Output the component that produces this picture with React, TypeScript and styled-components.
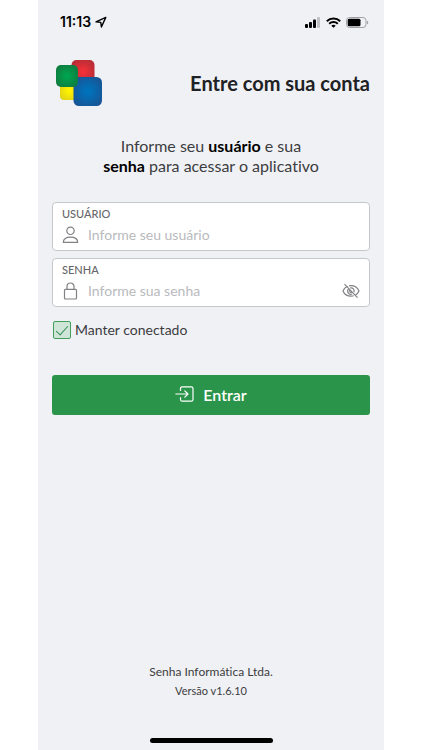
import React, { useState } from "react";
import styled, { createGlobalStyle } from "styled-components";

const GlobalStyle = createGlobalStyle`
  *, *::before, *::after { box-sizing: border-box; }
  body {
    margin: 0;
    background: #ffffff;
    color: #3c3d40;
    font-family: Lato, "Open Sans", sans-serif;
    font-variant-ligatures: none;
  }
  button, input { font: inherit; }
`;

const Page = styled.div`
  min-height: 100vh;
  display: flex;
  padding: 0 38px;
`;

const Screen = styled.div`
  flex: 1;
  min-width: 0;
  display: flex;
  flex-direction: column;
  background: #f0f1f5;
`;

const StatusBar = styled.div`
  height: 44px;
  padding: 0 15px 0 22px;
  display: flex;
  align-items: center;
  justify-content: space-between;
  color: #000000;
`;

const Clock = styled.div`
  display: flex;
  align-items: center;
  gap: 4px;
  font: 600 14px/16px Inter, sans-serif;
`;

const Indicators = styled.div`
  display: flex;
  align-items: center;
  gap: 5px;
`;

const Header = styled.header`
  display: flex;
  align-items: center;
  justify-content: space-between;
  padding: 16px 14px 0 18px;
`;

const Title = styled.h1`
  margin: 0;
  color: #202124;
  font-size: 20px;
  line-height: 24px;
  font-weight: 700;
`;

const Main = styled.main`
  display: flex;
  flex-direction: column;
  padding: 30px 14px 0;
`;

const Intro = styled.p`
  margin: 0 auto 26px;
  max-width: 222px;
  text-align: center;
  font-size: 16px;
  line-height: 20px;

  strong { color: #000000; }
`;

const Form = styled.form`
  display: flex;
  flex-direction: column;
`;

const Field = styled.div`
  height: 49px;
  margin-bottom: 7px;
  padding: 5px 9px 0;
  background: #ffffff;
  border: 1px solid #c6c7cb;
  border-radius: 4px;
`;

const FieldLabel = styled.label`
  display: block;
  color: #66676a;
  font-size: 11px;
  line-height: 12px;
  font-weight: 500;
`;

const FieldRow = styled.div`
  display: flex;
  align-items: center;
  gap: 9px;
  height: 30px;
  color: #808184;
`;

const TextInput = styled.input`
  flex: 1;
  min-width: 0;
  height: 24px;
  padding: 0 0 2px;
  border: 0;
  outline: 0;
  background: transparent;
  color: #3c3d40;
  font-size: 14px;

  &::placeholder { color: #b9babd; opacity: 1; }
`;

const IconButton = styled.button`
  display: flex;
  padding: 0;
  border: 0;
  background: none;
  color: inherit;
  cursor: pointer;
`;

const CheckLabel = styled.label`
  display: flex;
  align-items: center;
  gap: 4px;
  margin-top: 7px;
  font-size: 14px;
  line-height: 18px;
`;

const Checkbox = styled.input`
  appearance: none;
  width: 18px;
  height: 18px;
  margin: 0 0 0 1px;
  display: grid;
  place-items: center;
  border: 1px solid #3f9f5b;
  border-radius: 2px;
  background: #ffffff;

  &:checked { background: #cfe5d7; }
  &:checked::before {
    content: "";
    width: 6px;
    height: 12px;
    margin-top: -3px;
    border: solid #34915a;
    border-width: 0 1px 1px 0;
    transform: rotate(42deg);
  }
`;

const SubmitButton = styled.button`
  display: flex;
  align-items: center;
  justify-content: center;
  gap: 9px;
  height: 40px;
  margin-top: 36px;
  padding: 0 0 2px;
  border: 0;
  border-radius: 3px;
  background: #2a944b;
  color: #ffffff;
  font-size: 16px;
  font-weight: 600;
  cursor: pointer;
`;

const Footer = styled.footer`
  margin-top: auto;
  padding-bottom: 7px;
  display: flex;
  flex-direction: column;
  align-items: center;
`;

const Company = styled.span`
  font-size: 12px;
  line-height: 20px;
`;

const Version = styled.span`
  font-size: 11px;
  line-height: 18px;
`;

const HomeIndicator = styled.div`
  width: 123px;
  height: 5px;
  margin-top: 38px;
  border-radius: 3px;
  background: #000000;
`;

const LocationIcon = () => (
  <svg width="12" height="12" viewBox="0 0 12 12" fill="none" stroke="currentColor" strokeWidth="1.4" strokeLinejoin="round">
    <path d="M10.800 1.400 1 5.900l4.800.5.600 4.600Z" />
  </svg>
);

const SignalIcon = () => (
  <svg width="16" height="11" viewBox="0 0 16 11" fill="currentColor">
    <rect x="0" y="7" width="3" height="4" rx="1" />
    <rect x="4" y="5" width="3" height="6" rx="1" />
    <rect x="8" y="2.5" width="3" height="8.5" rx="1" />
    <rect x="12" y="0" width="3" height="11" rx="1" opacity="0.2" />
  </svg>
);

const WifiIcon = () => (
  <svg width="15" height="11" viewBox="0 0 15 11" fill="none" stroke="currentColor" strokeWidth="2">
    <path d="M.8 4.2a9.6 9.6 0 0 1 13.4 0" />
    <path d="M3.2 6.8a6.2 6.2 0 0 1 8.6 0" />
    <path d="M7.5 10.8 5.3 8.7a3.2 3.2 0 0 1 4.4 0Z" fill="currentColor" stroke="none" />
  </svg>
);

const BatteryIcon = () => (
  <svg width="23" height="11" viewBox="0 0 23 11">
    <rect x=".5" y=".5" width="19.5" height="10" rx="3" fill="none" stroke="#a0a1a4" />
    <rect x="1.7" y="1.7" width="12.8" height="7.6" rx="1.5" fill="#000" />
    <path d="M21 3.7c1.7.5 1.7 3.1 0 3.6Z" fill="#a0a1a4" />
  </svg>
);

const shades = [
  { id: "red", inner: "#ef3038", outer: "#a92c35" },
  { id: "yellow", inner: "#fff200", outer: "#d9cd1c" },
  { id: "green", inner: "#00a34e", outer: "#12733c" },
  { id: "blue", inner: "#0072bc", outer: "#1c4f8c" },
];

const Logo = () => (
  <svg width="46" height="46" viewBox="0 0 46 46" role="img" aria-label="Senha Informática">
    <defs>
      {shades.map((s) => (
        <radialGradient key={s.id} id={s.id} r="0.7">
          <stop offset="0.1" stopColor={s.inner} />
          <stop offset="1" stopColor={s.outer} />
        </radialGradient>
      ))}
    </defs>
    <rect x="4" y="21" width="19" height="19" rx="4" fill="url(#yellow)" />
    <rect x="15.5" y="0" width="23" height="23" rx="5" fill="url(#red)" />
    <rect x="17.5" y="17" width="28.5" height="29" rx="5.5" fill="url(#blue)" />
    <rect x="0" y="5" width="22" height="22" rx="5" fill="url(#green)" />
  </svg>
);

const UserIcon = () => (
  <svg width="17" height="18" viewBox="0 0 17 18" fill="none" stroke="currentColor" strokeWidth="1.2">
    <circle cx="8.5" cy="4.8" r="3.7" />
    <path d="M1.3 16.300c0-3.300 2.900-5.200 7.200-5.200s7.200 1.900 7.200 5.200Z" strokeLinejoin="round" />
  </svg>
);

const LockIcon = () => (
  <svg width="17" height="18" viewBox="0 0 17 18" fill="none" stroke="currentColor" strokeWidth="1.2">
    <rect x="2.5" y="7.3" width="12" height="9.7" rx="1" />
    <path d="M5 7.3V4.5a3.5 3.5 0 0 1 7 0v2.8" />
  </svg>
);

const EyeOffIcon = () => (
  <svg width="18" height="16" viewBox="0 0 18 16" fill="none" stroke="currentColor" strokeWidth="1.2">
    <path d="M5.500 3.300C3.400 4.300 1.800 6 1 8c1.400 3.300 4.400 5.200 8 5.200 1 0 1.900-.1 2.700-.4" />
    <path d="M7 2.900c.6-.1 1.300-.2 2-.2 3.600 0 6.600 2 8 5.300-.7 1.600-1.900 3-3.500 3.900" />
    <path d="M6.600 5.800a3.200 3.200 0 0 0 3.500 5.200M8.300 4.900a3.200 3.200 0 0 1 3.600 4.300M8 6.900a1.500 1.500 0 0 0 1.800 2.300" />
    <path d="m2.500 1.200 13 13.400" />
  </svg>
);

const EnterIcon = () => (
  <svg width="19" height="16" viewBox="0 0 19 16" fill="none" stroke="currentColor" strokeWidth="1.2" strokeLinecap="round" strokeLinejoin="round">
    <path d="M5.500 4.500V2.600c0-1.100.7-1.800 1.800-1.800h8.900c1.100 0 1.800.7 1.800 1.800v10.800c0 1.100-.7 1.800-1.800 1.800H7.300c-1.100 0-1.800-.7-1.800-1.800v-1.900" />
    <path d="M.8 8h12M9.800 4.800 13 8l-3.200 3.200" />
  </svg>
);

export default function App() {
  const [visible, setVisible] = useState(false);
  return (
    <>
      <GlobalStyle />
      <Page>
        <Screen>
          <StatusBar>
            <Clock>11:13<LocationIcon /></Clock>
            <Indicators><SignalIcon /><WifiIcon /><BatteryIcon /></Indicators>
          </StatusBar>
          <Header>
            <Logo />
            <Title>Entre com sua conta</Title>
          </Header>
          <Main>
            <Intro>
              Informe seu <strong>usuário</strong> e sua <strong>senha</strong> para acessar o aplicativo
            </Intro>
            <Form onSubmit={(e) => e.preventDefault()}>
              <Field>
                <FieldLabel htmlFor="user">USUÁRIO</FieldLabel>
                <FieldRow>
                  <UserIcon />
                  <TextInput id="user" type="text" placeholder="Informe seu usuário" />
                </FieldRow>
              </Field>
              <Field>
                <FieldLabel htmlFor="password">SENHA</FieldLabel>
                <FieldRow>
                  <LockIcon />
                  <TextInput id="password" type={visible ? "text" : "password"} placeholder="Informe sua senha" />
                  <IconButton type="button" aria-label="Mostrar senha" onClick={() => setVisible(!visible)}>
                    <EyeOffIcon />
                  </IconButton>
                </FieldRow>
              </Field>
              <CheckLabel>
                <Checkbox type="checkbox" defaultChecked />
                Manter conectado
              </CheckLabel>
              <SubmitButton type="submit"><EnterIcon />Entrar</SubmitButton>
            </Form>
          </Main>
          <Footer>
            <Company>Senha Informática Ltda.</Company>
            <Version>Versão v1.6.10</Version>
            <HomeIndicator />
          </Footer>
        </Screen>
      </Page>
    </>
  );
}
